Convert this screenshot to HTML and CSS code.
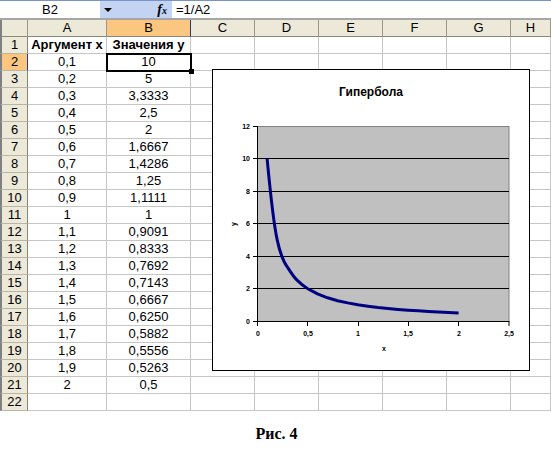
FILE: index.html
```html
<!DOCTYPE html>
<html lang="ru">
<head>
<meta charset="utf-8">
<title>Гипербола</title>
<link rel="stylesheet" href="styles.css">
</head>
<body>
<div class="fbar">
  <div class="namebox">B2</div>
  <div class="ddbtn"><span class="tri"></span></div>
  <div class="fxzone"><i>f</i><span class="fxx">x</span></div>
  <div class="formula">=1/A2</div>
</div>
<div class="sheet">
  <div class="row hdr">
    <div class="corner"></div><div class="ch">A</div><div class="ch hsel">B</div><div class="ch">C</div><div class="ch">D</div><div class="ch">E</div><div class="ch">F</div><div class="ch">G</div><div class="ch">H</div>
  </div>
  <div class="row"><div class="rh">1</div><div class="c b">Аргумент x</div><div class="c b">Значения y</div><div class="c"></div><div class="c"></div><div class="c"></div><div class="c"></div><div class="c"></div><div class="c"></div></div>
  <div class="row"><div class="rh hsel">2</div><div class="c">0,1</div><div class="c sel">10</div><div class="c"></div><div class="c"></div><div class="c"></div><div class="c"></div><div class="c"></div><div class="c"></div></div>
  <div class="row"><div class="rh">3</div><div class="c">0,2</div><div class="c">5</div><div class="c"></div><div class="c"></div><div class="c"></div><div class="c"></div><div class="c"></div><div class="c"></div></div>
  <div class="row"><div class="rh">4</div><div class="c">0,3</div><div class="c">3,3333</div><div class="c"></div><div class="c"></div><div class="c"></div><div class="c"></div><div class="c"></div><div class="c"></div></div>
  <div class="row"><div class="rh">5</div><div class="c">0,4</div><div class="c">2,5</div><div class="c"></div><div class="c"></div><div class="c"></div><div class="c"></div><div class="c"></div><div class="c"></div></div>
  <div class="row"><div class="rh">6</div><div class="c">0,5</div><div class="c">2</div><div class="c"></div><div class="c"></div><div class="c"></div><div class="c"></div><div class="c"></div><div class="c"></div></div>
  <div class="row"><div class="rh">7</div><div class="c">0,6</div><div class="c">1,6667</div><div class="c"></div><div class="c"></div><div class="c"></div><div class="c"></div><div class="c"></div><div class="c"></div></div>
  <div class="row"><div class="rh">8</div><div class="c">0,7</div><div class="c">1,4286</div><div class="c"></div><div class="c"></div><div class="c"></div><div class="c"></div><div class="c"></div><div class="c"></div></div>
  <div class="row"><div class="rh">9</div><div class="c">0,8</div><div class="c">1,25</div><div class="c"></div><div class="c"></div><div class="c"></div><div class="c"></div><div class="c"></div><div class="c"></div></div>
  <div class="row"><div class="rh">10</div><div class="c">0,9</div><div class="c">1,1111</div><div class="c"></div><div class="c"></div><div class="c"></div><div class="c"></div><div class="c"></div><div class="c"></div></div>
  <div class="row"><div class="rh">11</div><div class="c">1</div><div class="c">1</div><div class="c"></div><div class="c"></div><div class="c"></div><div class="c"></div><div class="c"></div><div class="c"></div></div>
  <div class="row"><div class="rh">12</div><div class="c">1,1</div><div class="c">0,9091</div><div class="c"></div><div class="c"></div><div class="c"></div><div class="c"></div><div class="c"></div><div class="c"></div></div>
  <div class="row"><div class="rh">13</div><div class="c">1,2</div><div class="c">0,8333</div><div class="c"></div><div class="c"></div><div class="c"></div><div class="c"></div><div class="c"></div><div class="c"></div></div>
  <div class="row"><div class="rh">14</div><div class="c">1,3</div><div class="c">0,7692</div><div class="c"></div><div class="c"></div><div class="c"></div><div class="c"></div><div class="c"></div><div class="c"></div></div>
  <div class="row"><div class="rh">15</div><div class="c">1,4</div><div class="c">0,7143</div><div class="c"></div><div class="c"></div><div class="c"></div><div class="c"></div><div class="c"></div><div class="c"></div></div>
  <div class="row"><div class="rh">16</div><div class="c">1,5</div><div class="c">0,6667</div><div class="c"></div><div class="c"></div><div class="c"></div><div class="c"></div><div class="c"></div><div class="c"></div></div>
  <div class="row"><div class="rh">17</div><div class="c">1,6</div><div class="c">0,6250</div><div class="c"></div><div class="c"></div><div class="c"></div><div class="c"></div><div class="c"></div><div class="c"></div></div>
  <div class="row"><div class="rh">18</div><div class="c">1,7</div><div class="c">0,5882</div><div class="c"></div><div class="c"></div><div class="c"></div><div class="c"></div><div class="c"></div><div class="c"></div></div>
  <div class="row"><div class="rh">19</div><div class="c">1,8</div><div class="c">0,5556</div><div class="c"></div><div class="c"></div><div class="c"></div><div class="c"></div><div class="c"></div><div class="c"></div></div>
  <div class="row"><div class="rh">20</div><div class="c">1,9</div><div class="c">0,5263</div><div class="c"></div><div class="c"></div><div class="c"></div><div class="c"></div><div class="c"></div><div class="c"></div></div>
  <div class="row"><div class="rh">21</div><div class="c">2</div><div class="c">0,5</div><div class="c"></div><div class="c"></div><div class="c"></div><div class="c"></div><div class="c"></div><div class="c"></div></div>
  <div class="row"><div class="rh">22</div><div class="c"></div><div class="c"></div><div class="c"></div><div class="c"></div><div class="c"></div><div class="c"></div><div class="c"></div><div class="c"></div></div>

  <svg class="chart" width="318" height="302" viewBox="0 0 318 302">
    <rect x="0.5" y="0.5" width="317" height="301" fill="#fff" stroke="#000"/>
    <text class="ttl" x="159" y="27" text-anchor="middle">Гипербола</text>
    <rect x="45.5" y="57.5" width="251.5" height="195" fill="#c0c0c0" stroke="#808080"/>
    <g stroke="#000" stroke-width="1">
      <line x1="45" y1="89.5" x2="297" y2="89.5"/>
      <line x1="45" y1="122.5" x2="297" y2="122.5"/>
      <line x1="45" y1="154.5" x2="297" y2="154.5"/>
      <line x1="45" y1="187.5" x2="297" y2="187.5"/>
      <line x1="45" y1="219.5" x2="297" y2="219.5"/>
      <line x1="45.5" y1="57" x2="45.5" y2="253"/>
      <line x1="45" y1="252.5" x2="297" y2="252.5"/>
      <line x1="41" y1="57.5" x2="45" y2="57.5"/>
      <line x1="41" y1="89.5" x2="45" y2="89.5"/>
      <line x1="41" y1="122.5" x2="45" y2="122.5"/>
      <line x1="41" y1="154.5" x2="45" y2="154.5"/>
      <line x1="41" y1="187.5" x2="45" y2="187.5"/>
      <line x1="41" y1="219.5" x2="45" y2="219.5"/>
      <line x1="41" y1="252.5" x2="45" y2="252.5"/>
      <line x1="45.5" y1="252" x2="45.5" y2="257"/>
      <line x1="95.5" y1="252" x2="95.5" y2="257"/>
      <line x1="146.5" y1="252" x2="146.5" y2="257"/>
      <line x1="196.5" y1="252" x2="196.5" y2="257"/>
      <line x1="246.5" y1="252" x2="246.5" y2="257"/>
      <line x1="297" y1="252" x2="297" y2="257"/>
    </g>
    <g class="tick" text-anchor="end">
      <text x="38" y="60">12</text>
      <text x="38" y="92">10</text>
      <text x="38" y="125">8</text>
      <text x="38" y="157">6</text>
      <text x="38" y="190">4</text>
      <text x="38" y="222">2</text>
      <text x="38" y="255">0</text>
    </g>
    <g class="tick" text-anchor="middle">
      <text x="46" y="267">0</text>
      <text x="96" y="267">0,5</text>
      <text x="146" y="267">1</text>
      <text x="196" y="267">1,5</text>
      <text x="247" y="267">2</text>
      <text x="297" y="267">2,5</text>
      <text x="172" y="282">x</text>
      <text x="0" y="0" transform="translate(24 155) rotate(-90)">y</text>
    </g>
    <path fill="none" stroke="#000080" stroke-width="3" stroke-linejoin="round" stroke-linecap="butt"
      d="M55.1 89.5 C58 120 61 152 65.2 170.8 C68 184 71 192 75.2 197.8 C78.5 203 81.5 208 85.3 211.4 C88.5 214.5 92 217.5 95.4 219.5 L105.5 224.9 L115.6 228.8 L125.6 231.7 L135.7 233.9 L145.8 235.8 L155.9 237.2 L166 238.5 L176 239.5 L186.1 240.4 L196.2 241.2 L206.3 241.8 L216.4 242.4 L226.4 243 L236.5 243.4 L246.6 243.9"/>
  </svg>
</div>
<div class="caption">Рис. 4</div>
</body>
</html>
```

FILE: styles.css
```css
body {
  margin: 0;
  width: 551px;
  height: 469px;
  overflow: hidden;
  background: #fff;
  font-family: "Liberation Sans", Arial, sans-serif;
  font-size: 13px;
  color: #000;
}

.fbar {
  display: flex;
  height: 17px;
  border-top: 1px solid #7893cc;
  border-bottom: 2px solid #a6a6a6;
  line-height: 17px;
}
.namebox {
  width: 100px;
  text-align: center;
  background: #fff;
}
.ddbtn {
  width: 15px;
  background: #c3d4f2;
  display: flex;
  align-items: center;
  justify-content: center;
}
.tri {
  width: 0;
  height: 0;
  border-left: 4px solid transparent;
  border-right: 4px solid transparent;
  border-top: 4px solid #000;
}
.fxzone {
  width: 57px;
  box-sizing: border-box;
  background: #c3d4f2;
  text-align: right;
  padding-right: 5px;
  font-family: "Liberation Serif", "Times New Roman", serif;
  font-size: 14px;
  font-weight: bold;
}
.fxzone i { font-style: italic; }
.fxx {
  font-style: italic;
  font-size: 10px;
}
.formula {
  flex: 1;
  padding-left: 4px;
  background: #fff;
}

.sheet {
  position: relative;
  width: 551px;
  overflow: hidden;
}
.row {
  display: grid;
  grid-template-columns: 28px 79px 84px 64px 64px 64px 64px 64px 40px;
  height: 17px;
}
.row > div {
  box-sizing: border-box;
  height: 17px;
  line-height: 16px;
  text-align: center;
  white-space: nowrap;
  overflow: hidden;
}
.c {
  border-right: 1px solid #c6c6c6;
  border-bottom: 1px solid #c6c6c6;
}
.b { font-weight: bold; }

.corner, .ch, .rh {
  background: #ece9d8;
}
.corner {
  border-left: 2px solid #808080;
  border-right: 1px solid #9a9788;
  border-bottom: 1px solid #8a8778;
}
.ch {
  border-right: 1px solid #9a9788;
  border-bottom: 1px solid #8a8778;
}
.rh {
  border-left: 2px solid #808080;
  border-right: 1px solid #8a8778;
  border-bottom: 1px solid #b9b6a6;
}
.ch.hsel {
  background: #fbc67f;
  border-right: 1px solid #1d3b8f;
}
.rh.hsel {
  background: #fbc67f;
  border-right: 1px solid #1d3b8f;
}

.sel { position: relative; overflow: visible !important; }
.sel::after {
  content: "";
  position: absolute;
  left: -1px;
  top: -1px;
  right: -2px;
  bottom: -2px;
  border: 2px solid #000;
}
.sel::before {
  content: "";
  position: absolute;
  right: -4px;
  bottom: -4px;
  width: 5px;
  height: 5px;
  background: #000;
  z-index: 2;
}

.chart {
  position: absolute;
  left: 212px;
  top: 49px;
}
.ttl {
  font-family: "Liberation Sans", Arial, sans-serif;
  font-size: 12px;
  font-weight: bold;
}
.tick {
  font-family: "Liberation Sans", Arial, sans-serif;
  font-size: 7px;
  font-weight: bold;
}

.caption {
  margin-top: 14px;
  text-align: center;
  font-family: "Liberation Serif", "Times New Roman", serif;
  font-weight: bold;
  font-size: 16px;
  padding-left: 2px;
}
```
